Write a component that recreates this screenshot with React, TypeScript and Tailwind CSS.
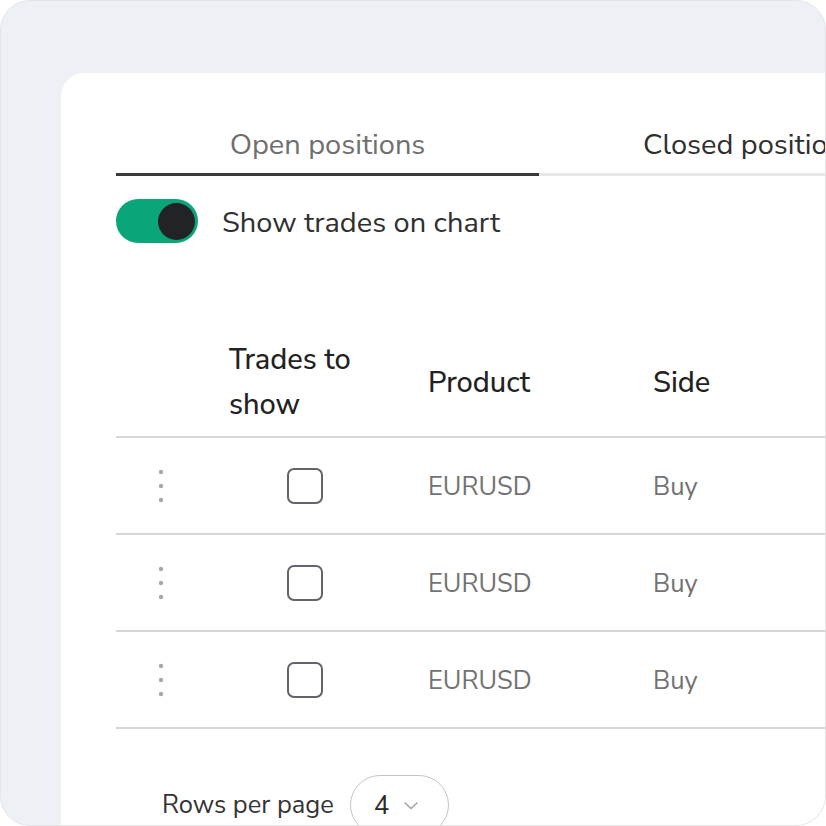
import React, { useState } from 'react';

const font = { fontFamily: '"Nunito Sans", Lato, "Noto Sans", sans-serif' };

const rows = [
  { product: 'EURUSD', side: 'Buy' },
  { product: 'EURUSD', side: 'Buy' },
  { product: 'EURUSD', side: 'Buy' },
];

function KebabIcon() {
  return (
    <svg width="6" height="34" viewBox="0 0 6 34" fill="#a8a8a8">
      <circle cx="3" cy="3" r="2.2" />
      <circle cx="3" cy="17" r="2.2" />
      <circle cx="3" cy="31" r="2.2" />
    </svg>
  );
}

function Toggle({ on, onChange }: { on: boolean; onChange: () => void }) {
  return (
    <button
      onClick={onChange}
      className={`flex h-[44px] w-[82px] items-center rounded-full px-[3px] ${
        on ? 'justify-end bg-[#0aa67a]' : 'justify-start bg-[#c9cdd2]'
      }`}
    >
      <span className="h-[37px] w-[37px] rounded-full bg-[#222327]" />
    </button>
  );
}

export default function App() {
  const [showTrades, setShowTrades] = useState(true);
  const [checked, setChecked] = useState<boolean[]>([false, false, false]);

  return (
    <div
      style={font}
      className="h-[826px] w-[826px] overflow-hidden rounded-[30px] border border-[#e2e4e8] bg-[#edf1f5] pl-[60px] pt-[72px]"
    >
      <div className="h-[900px] w-[1300px] rounded-tl-[23px] bg-white pl-[55px]">
        {/* tabs */}
        <div className="flex">
          <div className="w-[423px] border-b-[3px] border-[#3a3a3a] pb-[8px] pt-[52px] text-center text-[29px] leading-[40px] text-[#6f6f6f]">
            Open positions
          </div>
          <div className="w-[423px] border-b-[3px] border-[#e7e7e7] pb-[8px] pt-[52px] text-center text-[29px] leading-[40px] text-[#2f2f2f]">
            Closed positions
          </div>
          <div className="w-[300px] border-b-[3px] border-[#e7e7e7]" />
        </div>

        {/* toggle */}
        <div className="mt-[23px] flex items-center gap-[24px]">
          <Toggle on={showTrades} onChange={() => setShowTrades(!showTrades)} />
          <span className="translate-y-[2px] text-[29px] text-[#303030]">Show trades on chart</span>
        </div>

        {/* table */}
        <div className="mt-[84px]">
          <div className="grid grid-cols-[90px_198px_225px_225px_1fr] items-center border-b-2 border-[#d6d6d6] pb-[9px] pt-[10px] text-[29px] font-medium leading-[45px] text-[#222]">
            <div />
            <div className="px-[23px]">Trades to show</div>
            <div className="px-[24px]">Product</div>
            <div className="px-[24px]">Side</div>
            <div />
          </div>
          {rows.map((r, i) => (
            <div
              key={i}
              className="grid h-[97px] grid-cols-[90px_198px_225px_225px_1fr] items-center border-b-2 border-[#d6d6d6] text-[25.5px] text-[#727272]"
            >
              <div className="flex justify-center">
                <KebabIcon />
              </div>
              <div className="flex justify-center">
                <button
                  onClick={() => setChecked(checked.map((c, j) => (j === i ? !c : c)))}
                  className="h-[36px] w-[36px] rounded-[7px] border-2 border-[#616469] bg-white"
                />
              </div>
              <div className="px-[24px] pt-[4px]">{r.product}</div>
              <div className="px-[24px] pt-[4px]">{r.side}</div>
              <div />
            </div>
          ))}
        </div>

        {/* footer */}
        <div className="mt-[46px] flex items-center gap-[16px] pl-[46px]">
          <span className="text-[25.5px] text-[#333]">Rows per page</span>
          <div className="flex h-[60px] w-[99px] items-center gap-[14px] rounded-full border border-[#c4c4c4] pl-[23px]">
            <span className="text-[26px] text-[#2a2a2a]">4</span>
            <svg width="16" height="9" viewBox="0 0 16 9" fill="none" stroke="#a0a0a0" strokeWidth="1.4">
              <polyline points="1.5,1.5 8,7.5 14.5,1.5" />
            </svg>
          </div>
        </div>
      </div>
    </div>
  );
}
